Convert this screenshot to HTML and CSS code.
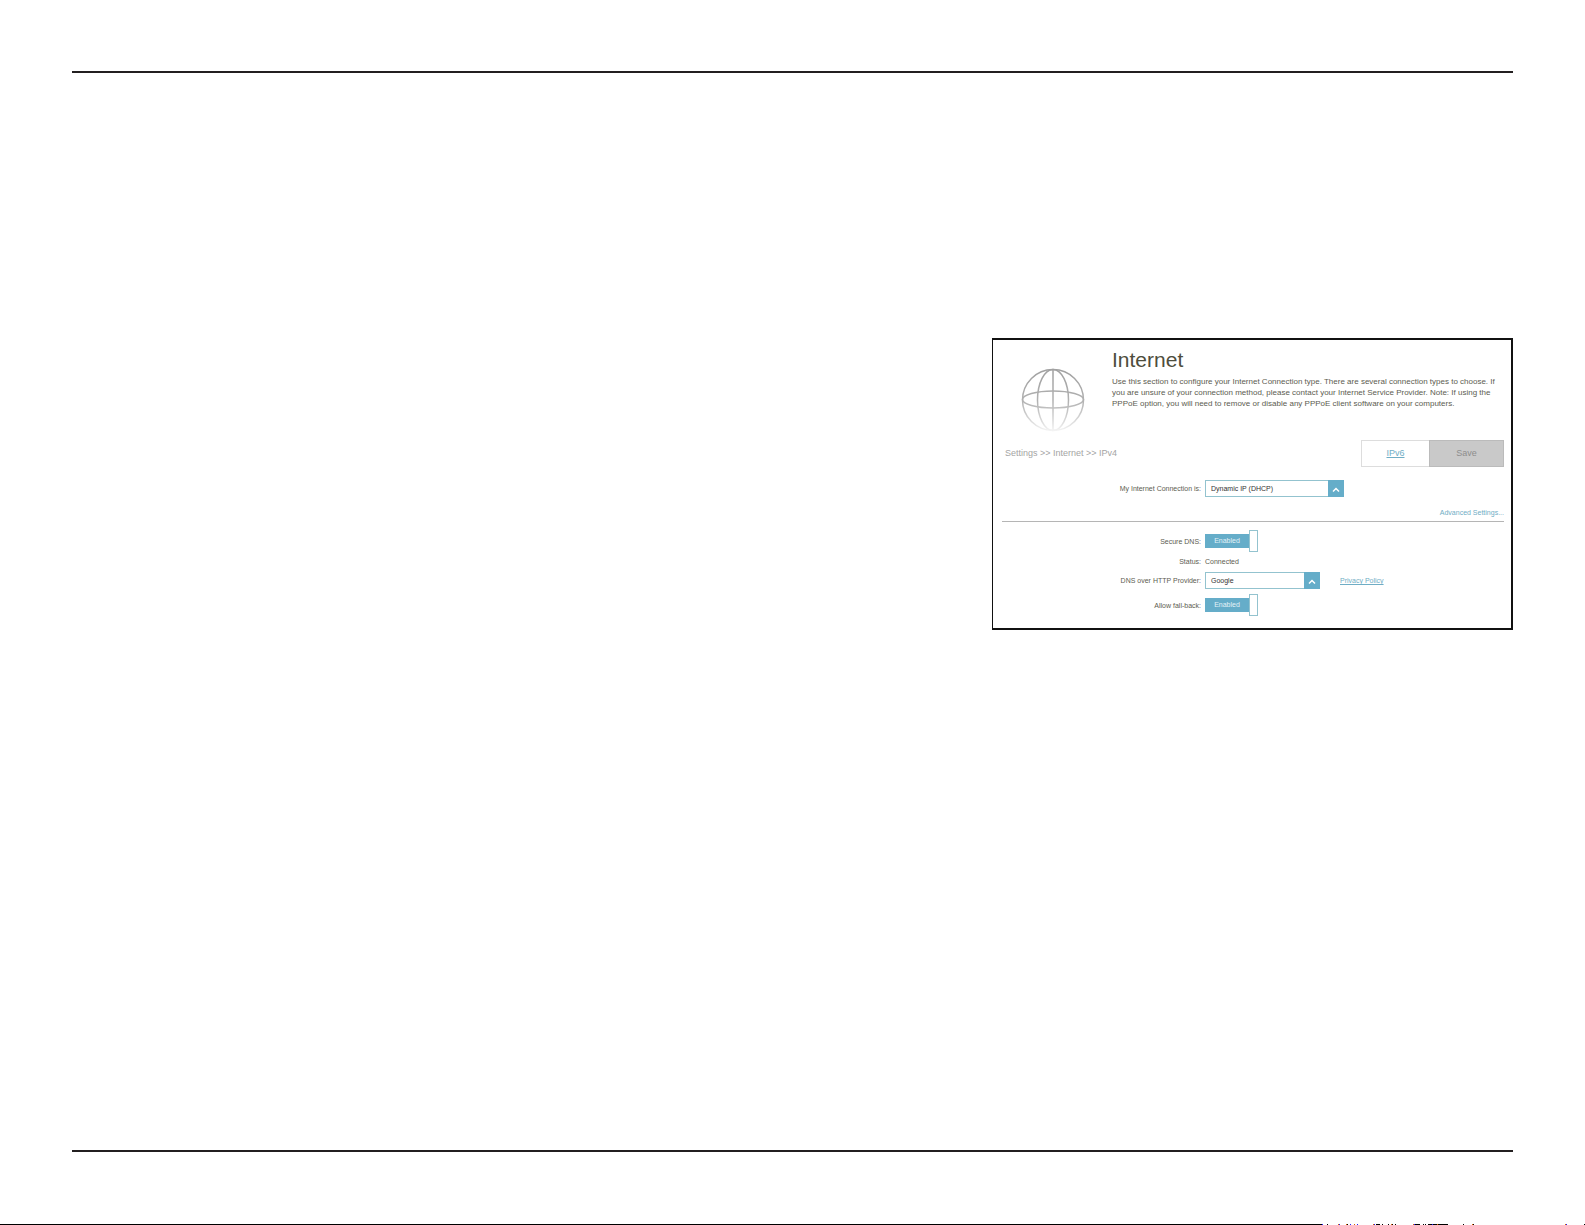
FILE: index.html
```html
<!DOCTYPE html>
<html lang="en">
<head>
<meta charset="utf-8">
<title>Internet settings</title>
<link rel="stylesheet" href="styles.css">
</head>
<body>
<div class="sheet">
  <main class="content">
    <section class="panel">
      <header class="intro">
        <svg class="globe" viewBox="0 0 64 64" aria-hidden="true">
          <defs>
            <linearGradient id="fade" gradientUnits="userSpaceOnUse" x1="0" y1="0" x2="0" y2="64">
              <stop offset="0" stop-color="#a0a0a0"/>
              <stop offset="0.5" stop-color="#b0b0b0"/>
              <stop offset="0.8" stop-color="#d6d6d6"/>
              <stop offset="1" stop-color="#f6f6f6"/>
            </linearGradient>
          </defs>
          <g fill="none" stroke="url(#fade)" stroke-width="1.5">
            <circle cx="32" cy="32" r="30.5"/>
            <ellipse cx="32" cy="32" rx="15.5" ry="30.5"/>
            <ellipse cx="32" cy="31.5" rx="30.5" ry="8.5"/>
            <path d="M32 1.5V62.4L32.1 62.5"/>
          </g>
        </svg>
        <div class="about">
          <h1>Internet</h1>
          <p>Use this section to configure your Internet Connection type. There are several connection types to choose. If<br>you are unsure of your connection method, please contact your Internet Service Provider. Note: If using the<br>PPPoE option, you will need to remove or disable any PPPoE client software on your computers.</p>
        </div>
      </header>
      <div class="toolbar">
        <nav class="crumbs">Settings &gt;&gt; Internet &gt;&gt; IPv4</nav>
        <a class="tab" href="#ipv6">IPv6</a>
        <button class="save" type="button">Save</button>
      </div>
      <form class="settings">
        <div class="row connection">
          <label for="conn">My Internet Connection is:</label>
          <span class="pick wide"><select id="conn"><option>Dynamic IP (DHCP)</option></select><svg viewBox="0 0 16 16" aria-hidden="true"><path d="M5 11L8 8L11 11"/></svg></span>
        </div>
        <div class="more"><a href="#advanced">Advanced Settings...</a></div>
        <div class="row toggle">
          <label for="dns">Secure DNS:</label>
          <button class="switch" id="dns" type="button"><span>Enabled</span><i></i></button>
        </div>
        <div class="row status"><span class="name">Status:</span><span>Connected</span></div>
        <div class="row provider">
          <label for="prov">DNS over HTTP Provider:</label>
          <span class="pick"><select id="prov"><option>Google</option></select><svg viewBox="0 0 16 16" aria-hidden="true"><path d="M5 11L8 8L11 11"/></svg></span>
          <a class="policy" href="#privacy">Privacy Policy</a>
        </div>
        <div class="row toggle">
          <label for="fall">Allow fall-back:</label>
          <button class="switch" id="fall" type="button"><span>Enabled</span><i></i></button>
        </div>
      </form>
    </section>
  </main>
</div>
<footer class="edge">
  <span></span>
  <svg viewBox="0 0 263 1" shape-rendering="crispEdges" aria-hidden="true">
    <path stroke="#000" d="M5 .5h1M16 .5h2M24 .5h2M28 .5h1M32 .5h1M35 .5h1M51 .5h2M54 .5h4M60 .5h1M66 .5h1M69 .5h2M73 .5h1M92 .5h6M101 .5h1M103 .5h1M106 .5h20M141 .5h1M151 .5h1M243 .5h2M262 .5h1"/>
    <path stroke="#22f" d="M0 .5h1M17 .5h1M28 .5h1M35 .5h1M52 .5h1M92 .5h1M110 .5h1M244 .5h1"/>
    <path stroke="#d60" d="M16 .5h1M24 .5h1M32 .5h1M51 .5h1M69 .5h1M91 .5h1M115 .5h1M150 .5h1M243 .5h1"/>
  </svg>
</footer>
</body>
</html>
```

FILE: styles.css
```css
* { box-sizing: border-box; }

body {
  margin: 0;
  min-height: 100vh;
  display: flex;
  flex-direction: column;
  background: #fff;
  color: #5c5c50;
  font: 7px/11px "Liberation Sans", Arial, sans-serif;
}

a { color: #6fadc5; }

.sheet {
  flex: 1;
  margin: 71px 72px 72px;
  display: flex;
  border-top: 2px solid #231f20;
  border-bottom: 2px solid #231f20;
}

.content {
  flex: 1;
  display: flex;
  justify-content: flex-end;
  align-items: flex-start;
  padding-top: 265px;
}

.panel {
  width: 36%;
  min-width: 521px;
  padding: 8px 7px 12px 9px;
  border: 2px solid #111;
  border-left-width: 1px;
}

.intro { display: flex; height: 92px; }
.globe { width: 64px; height: 64px; margin: 20px 27px 0 19px; }
.about { flex: 1; }

h1 {
  margin: 0 0 4px;
  color: #4e4d3c;
  font-size: 21px;
  line-height: 24px;
  font-weight: 400;
}

.about p { margin: 0; font-size: 8px; white-space: nowrap; }

.toolbar {
  display: flex;
  align-items: stretch;
  height: 27px;
  color: #a4a4a4;
  font-size: 9px;
  line-height: 27px;
}

.crumbs { flex: 1; padding-left: 3px; }
.tab { width: 68px; border: 1px solid #ddd; border-right: 0; line-height: 25px; text-align: center; }

.save {
  width: 75px;
  padding: 0;
  border: 1px solid #bbb;
  background: #c9c9c9;
  color: #8d8d8d;
  font: inherit;
  line-height: 25px;
}

.row { display: grid; grid-template-columns: 199px auto 1fr; column-gap: 4px; align-items: center; }
.row label, .name { text-align: right; }
.connection { height: 42px; }

.pick { position: relative; display: flex; width: 115px; height: 17px; }
.wide { width: 139px; }

.pick select {
  appearance: none;
  width: 100%;
  padding: 0 20px 0 5px;
  border: 1px solid #93c3cf;
  border-radius: 0;
  background: #fff;
  color: #333;
  font: inherit;
}

.pick svg {
  position: absolute;
  right: 0;
  top: 0;
  width: 16px;
  height: 17px;
  background: #65adc9;
  fill: none;
  stroke: #fff;
  stroke-width: 1.5;
  pointer-events: none;
}

.more { height: 13px; border-bottom: 1px solid #b5b5b5; line-height: 7px; text-align: right; }
.more a { text-decoration: none; }
.toggle { height: 22px; }

.switch {
  display: flex;
  align-items: center;
  padding: 0;
  border: 0;
  background: none;
  color: #e4f2f7;
  font: inherit;
}

.switch span { width: 44px; background: #65adc9; line-height: 14px; }
.switch i { width: 9px; height: 22px; border: 1px solid #93c3cf; background: #fff; }

.more + .toggle { margin-top: 8px; }
.status { height: 19px; }
.provider { height: 19px; margin-bottom: 4px; }
.policy { margin-left: 16px; }

.edge { display: flex; height: 1px; }
.edge span { flex: 1; background: #000; }
.edge svg { width: 263px; height: 1px; }
```
